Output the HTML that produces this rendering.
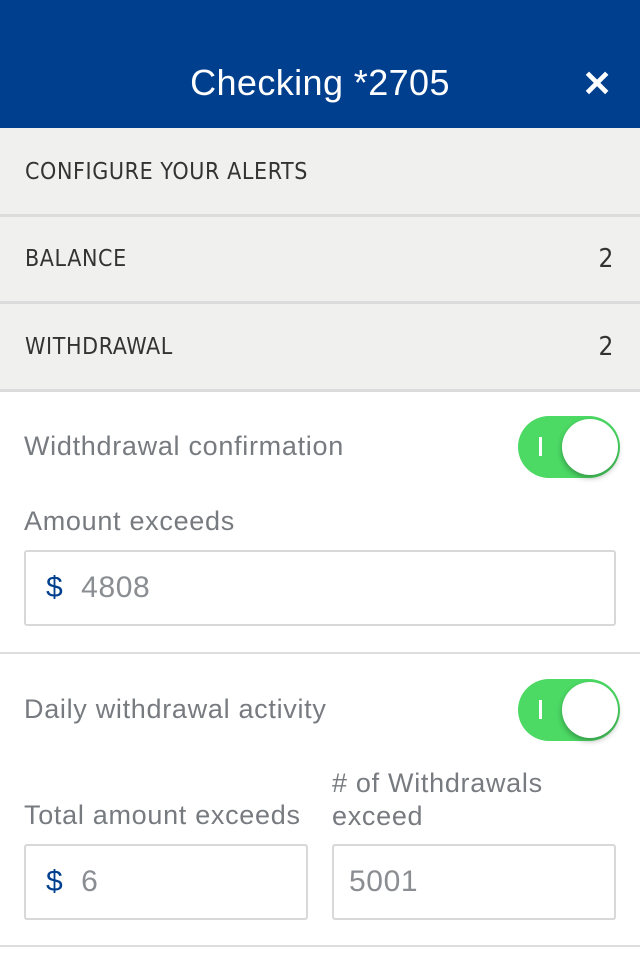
<!DOCTYPE html>
<html><head><style>
*{margin:0;padding:0;box-sizing:border-box}
body{width:640px;height:960px;background:#fff;font-family:"Liberation Sans",sans-serif;position:relative;overflow:hidden}
.a{position:absolute}
.hdr{left:0;top:0;width:640px;height:128px;background:#003f8e;color:#fff;font-size:36px;letter-spacing:0.4px;text-align:center;line-height:166px}
.row{left:0;width:640px;background:#f0f1ef;border-bottom:3px solid #dcdcdc;font-family:"DejaVu Sans Condensed","DejaVu Sans",sans-serif;font-size:23px;letter-spacing:0.6px;color:#333;padding-left:25px}
.row span{position:absolute;right:26px;font-size:26px}
.lbl{color:#777b80;font-size:27px;letter-spacing:0.7px;white-space:nowrap}
.inp{border:2px solid #d8d8d8;border-radius:3px;color:#8a8d91;font-size:30px;letter-spacing:0.6px}
.tog{width:102px;height:62px;border-radius:31px;background:#4cd964}
.tog i{position:absolute;left:21px;top:21px;width:3px;height:19px;background:#fff}
.tog b{position:absolute;right:2px;top:3px;width:56px;height:56px;border-radius:50%;background:#fff;box-shadow:0 3px 6px rgba(0,0,0,.3)}
.d{color:#003f8e}
.line{left:0;width:640px;height:2px;background:#ddd}
</style></head><body>
<div class="a hdr">Checking *2705</div>
<div class="a" style="left:582px;top:64px;color:#fff;font-size:36px;font-weight:bold;line-height:40px">✕</div>
<div class="a row" style="top:128px;height:89px;line-height:88px">CONFIGURE YOUR ALERTS</div>
<div class="a row" style="top:217px;height:87px;line-height:84px">BALANCE<span>2</span></div>
<div class="a row" style="top:304px;height:88px;line-height:86px">WITHDRAWAL<span>2</span></div>
<div class="a lbl" style="left:24px;top:431px">Widthdrawal confirmation</div>
<div class="a tog" style="left:518px;top:416px"><i></i><b></b></div>
<div class="a lbl" style="left:24px;top:506px">Amount exceeds</div>
<div class="a inp" style="left:24px;top:550px;width:592px;height:76px;line-height:72px;padding-left:20px"><span class="d">$</span>&nbsp; 4808</div>
<div class="a line" style="top:652px"></div>
<div class="a lbl" style="left:24px;top:694px">Daily withdrawal activity</div>
<div class="a tog" style="left:518px;top:679px"><i></i><b></b></div>
<div class="a lbl" style="left:24px;top:800px">Total amount exceeds</div>
<div class="a lbl" style="left:332px;top:767px;line-height:33px"># of Withdrawals<br>exceed</div>
<div class="a inp" style="left:24px;top:844px;width:284px;height:76px;line-height:72px;padding-left:20px"><span class="d">$</span>&nbsp; 6</div>
<div class="a inp" style="left:332px;top:844px;width:284px;height:76px;line-height:72px;padding-left:15px">5001</div>
<div class="a line" style="top:945px"></div>
</body></html>
